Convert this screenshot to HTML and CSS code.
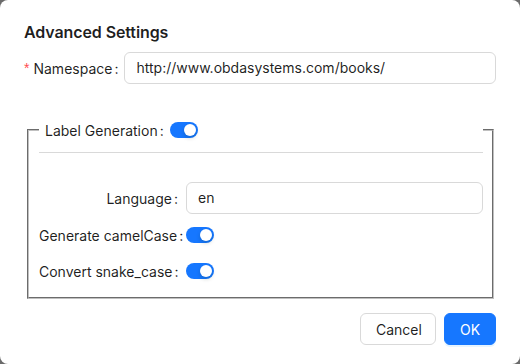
FILE: index.html
```html
<!DOCTYPE html>
<html>
<head>
<meta charset="utf-8">
<link rel="stylesheet" href="styles.css">
</head>
<body>
<div class="modal">
  <div class="title">Advanced Settings</div>
  <div class="ns-row">
    <label class="ns-label"><span class="req">*</span>Namespace<span class="colon">:</span></label>
    <div class="input">http://www.obdasystems.com/books/</div>
  </div>
  <fieldset class="group">
    <legend class="legend">
      <span class="legend-text">Label Generation<span class="colon">:</span></span>
      <span class="switch"><span class="knob"></span></span>
    </legend>
    <div class="divider"></div>
    <div class="row row-lang">
      <div class="lbl">Language<span class="colon">:</span></div>
      <div class="input input-lang">en</div>
    </div>
    <div class="row row-camel">
      <div class="lbl">Generate camelCase<span class="colon">:</span></div>
      <span class="switch"><span class="knob"></span></span>
    </div>
    <div class="row row-snake">
      <div class="lbl">Convert snake_case<span class="colon">:</span></div>
      <span class="switch"><span class="knob"></span></span>
    </div>
  </fieldset>
  <div class="footer">
    <button class="btn btn-default">Cancel</button>
    <button class="btn btn-primary">OK</button>
  </div>
</div>
</body>
</html>
```
FILE: styles.css
```css
html, body {
  margin: 0;
  padding: 0;
  background: #6b6b6b;
}
body {
  width: 520px;
  height: 364px;
  overflow: hidden;
  font-family: Inter, "Noto Sans", sans-serif;
  font-size: 14px;
  color: rgba(0, 0, 0, 0.88);
}
.modal {
  box-sizing: border-box;
  width: 520px;
  height: 364px;
  background: #fff;
  border-radius: 8px;
  padding: 20px 24px 0 24px;
}
.title {
  font-size: 16px;
  font-weight: 600;
  line-height: 24px;
  height: 24px;
  letter-spacing: -0.1px;
}
.ns-row {
  margin-top: 8px;
  display: flex;
  align-items: center;
  height: 32px;
}
.ns-label {
  flex: none;
  display: flex;
  align-items: center;
  white-space: nowrap;
}
.ns-label .colon {
  margin-right: 6px;
}
.req {
  color: #ff4d4f;
  margin-right: 4px;
  font-family: SimSun, "Liberation Sans", sans-serif;
  font-size: 14px;
}
.colon {
  margin: 0 8px 0 2px;
}
.input {
  box-sizing: border-box;
  height: 32px;
  line-height: 30px;
  border: 1px solid #d9d9d9;
  border-radius: 6px;
  padding: 0 11px;
  background: #fff;
  flex: 1;
  white-space: nowrap;
}
.group {
  margin: 35px 2px 0 3px;
  padding: 0 9px 10px 10px;
  border: 2px groove #c0c0c0;
}
.legend {
  box-sizing: border-box;
  width: 100%;
  padding: 0 0 0 6px;
  height: 22px;
  display: flex;
  align-items: center;
}
.legend-text {
  white-space: nowrap;
}
.legend .colon {
  margin-right: 6px;
}
.switch {
  position: relative;
  display: inline-block;
  width: 28px;
  height: 16px;
  border-radius: 8px;
  background: #1677ff;
  flex: none;
}
.knob {
  position: absolute;
  top: 2px;
  right: 2px;
  width: 12px;
  height: 12px;
  border-radius: 50%;
  background: #fff;
  box-shadow: 0 2px 4px rgba(0, 35, 11, 0.2);
}
.divider {
  margin-top: 11px;
  height: 1px;
  background: #d9d9d9;
}
.row {
  display: flex;
  align-items: center;
  height: 32px;
}
.row-lang { margin-top: 29px; }
.row-camel { margin-top: 5px; }
.row-snake { margin-top: 4px; }
.lbl {
  width: 147px;
  flex: none;
  text-align: right;
  white-space: nowrap;
}
.footer {
  margin-top: 14px;
  display: flex;
  justify-content: flex-end;
  gap: 8px;
}
.btn {
  box-sizing: border-box;
  height: 32px;
  padding: 0 15px;
  border-radius: 6px;
  font-family: Inter, "Noto Sans", sans-serif;
  font-size: 14px;
  cursor: pointer;
}
.btn-default {
  background: #fff;
  border: 1px solid #d9d9d9;
  color: rgba(0, 0, 0, 0.88);
  width: 76px;
}
.btn-primary {
  background: #1677ff;
  border: 1px solid #1677ff;
  color: #fff;
  width: 52px;
  box-shadow: 0 2px 0 rgba(5, 145, 255, 0.1);
}
```
